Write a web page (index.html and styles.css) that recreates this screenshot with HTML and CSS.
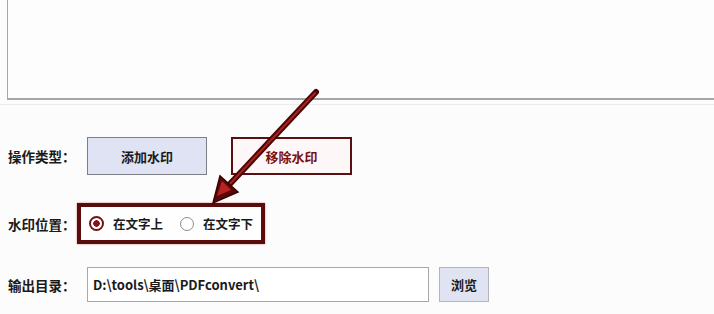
FILE: index.html
```html
<!DOCTYPE html>
<html lang="zh-CN">
<head>
    <meta charset="UTF-8">
    <title>PDF 水印</title>
    <link rel="stylesheet" href="styles.css">
</head>
<body>
    <div class="preview"></div>
    <div class="sep"></div>

    <div class="form">
        <div class="row row-type">
            <span class="label">操作类型：</span>
            <button class="btn btn-add">添加水印</button>
            <button class="btn btn-remove">移除水印</button>
        </div>

        <div class="row row-pos">
            <span class="label">水印位置：</span>
            <div class="pos-box">
                <span class="radio checked"></span>
                <span class="radio-text">在文字上</span>
                <span class="radio"></span>
                <span class="radio-text">在文字下</span>
            </div>
        </div>

        <div class="row row-out">
            <span class="label">输出目录：</span>
            <div class="path">D:\tools\桌面\PDFconvert\</div>
            <button class="btn btn-browse">浏览</button>
        </div>
    </div>

    <!-- callout arrow drawn over the form -->
    <svg class="arrow" width="714" height="314" viewBox="0 0 714 314">
        <line x1="316" y1="92" x2="228" y2="186" stroke="#4a0606" stroke-width="6" stroke-linecap="round"/>
        <line x1="315" y1="93" x2="228" y2="186" stroke="#a82020" stroke-width="2" stroke-linecap="round"/>
        <polygon points="213,203 220,176 238,192" fill="#5a0808" stroke="#3a0404" stroke-width="1.5"/>
        <polygon points="217,196 222,181 231,190" fill="#b82424"/>
    </svg>
</body>
</html>
```

FILE: styles.css
```css
body {
    margin: 0;
    padding: 0;
    background-color: #fcfcfc;
    font-family: "Noto Sans CJK SC", "Liberation Sans", sans-serif;
    font-size: 13px;
    color: #1a1a1a;
    position: relative;
    height: 314px;
    overflow: hidden;
}

.preview {
    height: 98px;
    margin-left: 7px;
    margin-right: -20px;
    background-color: #fdfdfd;
    border-left: 1px solid #a6a6a6;
    border-bottom: 2px solid #a6a6a6;
}

.sep {
    margin-top: 4px;
    border-top: 1px solid #ececec;
}

.form {
    padding-left: 8px;
}

.row {
    display: flex;
    align-items: center;
}

.label {
    width: 69px;
    font-size: 13.5px;
    font-weight: bold;
    flex-shrink: 0;
    white-space: nowrap;
}

.btn {
    font-family: inherit;
    font-size: 13px;
    font-weight: bold;
    padding: 0;
    cursor: pointer;
}

.row-type {
    margin-top: 32px;
    height: 38px;
}

.btn-add {
    margin-left: 10px;
    width: 120px;
    height: 38px;
    background-color: #dfe3f4;
    border: 1px solid #7e7e86;
    color: #1a1a1a;
}

.btn-remove {
    margin-left: 24px;
    width: 121px;
    height: 38px;
    background-color: #fdf7f7;
    border: 2px solid #5a1010;
    color: #7a1212;
}

.row-pos {
    margin-top: 28px;
}

.pos-box {
    display: flex;
    align-items: center;
    height: 33px;
    padding: 0 8px;
    width: 164px;
    border: 4px solid #5a0c0c;
    background-color: #fefefe;
    box-shadow: 0 0 2px #d08080;
}

.radio {
    width: 14px;
    height: 14px;
    border-radius: 50%;
    border: 1px solid #8a8a8a;
    background-color: #fff;
    box-sizing: border-box;
    flex-shrink: 0;
}

.radio.checked {
    width: 15px;
    height: 15px;
    border: 2px solid #7a1010;
    background: radial-gradient(circle, #8a1212 0 3px, #fff 3.5px);
}

.radio-text {
    font-size: 12.5px;
    font-weight: bold;
    margin-left: 9px;
    margin-right: 17px;
    white-space: nowrap;
    flex-shrink: 0;
}

.radio-text:last-child {
    margin-right: 0;
}

.row-out {
    margin-top: 23px;
}

.path {
    margin-left: 10px;
    width: 335px;
    height: 33px;
    line-height: 33px;
    padding-left: 5px;
    background-color: #fff;
    border: 1px solid #a8a8a8;
    font-weight: bold;
}

.btn-browse {
    margin-left: 10px;
    width: 50px;
    height: 35px;
    background-color: #dfe3f2;
    border: 1px solid #b4b4bc;
    color: #1a1a1a;
}

.arrow {
    position: absolute;
    left: 0;
    top: 0;
    pointer-events: none;
}
```
